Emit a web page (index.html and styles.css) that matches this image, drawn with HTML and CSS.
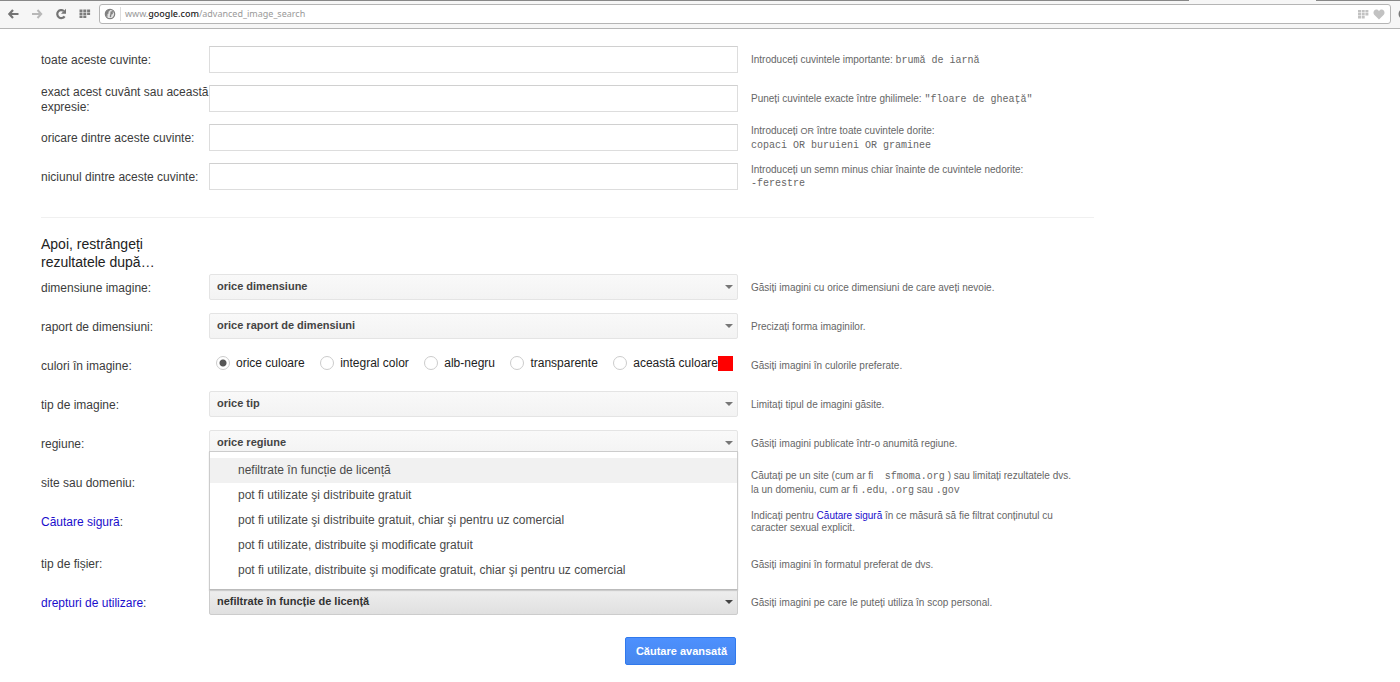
FILE: index.html
```html
<!DOCTYPE html>
<html lang="ro">
<head>
<meta charset="utf-8">
<title>Căutare avansată</title>
<link rel="stylesheet" href="styles.css">
</head>
<body>
<header class="toolbar">
  <div class="tab-strip"><span class="tab-active"></span><span class="tab-rest"></span></div>
  <div class="toolbar-row">
    <nav class="nav">
      <button class="icon-btn" aria-label="Înapoi"><svg width="12" height="10" viewBox="0 0 12 10"><path d="M6 1 2.300 5 6 9M3 5h8.500" fill="none" stroke="#747474" stroke-width="2.200"/></svg></button>
      <button class="icon-btn" aria-label="Înainte"><svg width="12" height="10" viewBox="0 0 12 10"><path d="M6.500 1l3.700 4-3.700 4M9.500 5H1" fill="none" stroke="#b8b8b8" stroke-width="2"/></svg></button>
      <button class="icon-btn" aria-label="Reîncarcă"><svg width="12" height="12" viewBox="0 0 12 12"><path d="M9.600 8.300A4 4 0 1 1 8.800 3" fill="none" stroke="#747474" stroke-width="2.200"/><path d="M11 .8v5H6z" fill="#747474"/></svg></button>
      <button class="icon-btn" aria-label="Acces rapid"><svg width="12" height="10" viewBox="0 0 12 10" fill="#7c7c7c"><path d="M.5.500h3v2.400h-3zM4.300.500h3v2.400h-3zM8.100.500h3v2.400h-3zM.5 3.500h3v2.400h-3zM4.300 3.500h3v2.400h-3zM8.100 3.500h3v2.400h-3zM.5 6.500h3v2.400h-3zM4.300 6.500h3v2.400h-3z"/></svg></button>
    </nav>
    <div class="address">
      <svg class="globe" width="12" height="12" viewBox="0 0 12 12"><circle cx="6" cy="6" r="4.700" fill="#e4e4e4" stroke="#808080" stroke-width="1.200"/><path d="M1.500 4 4 1.500l2 .7-1 1.300-1 .5 1 1-1.500 1L3.500 9 1.500 7zM6.500 3.500 9 3l1 1.500H8.500L9 6 7.500 6.500 7 9.500 5.700 8.500 6.300 6z" fill="#808080"/></svg>
      <span class="url">www.<b>google.com</b>/advanced_image_search</span>
      <svg width="11" height="9" viewBox="0 0 11 9" fill="#c2c2c2"><path d="M0 0h3v2.400H0zM3.700 0h3v2.400h-3zM7.400 0h3v2.400h-3zM0 3h3v2.400H0zM3.700 3h3v2.400h-3zM7.400 3h3v2.400h-3zM0 6h3v2.400H0zM3.700 6h3v2.400h-3z"/></svg>
      <svg class="heart" width="12" height="11" viewBox="0 0 12 11"><path d="M6 10.500 1.200 5.700C-.4 3.700.8.600 3.300.600 4.600.600 5.500 1.300 6 2.300 6.500 1.300 7.400.600 8.700.600c2.500 0 3.700 3.100 2.100 5.100z" fill="#c2c2c2"/></svg>
    </div>
    <svg class="search-edge" width="12" height="12" viewBox="0 0 12 12"><circle cx="6" cy="6" r="4.500" fill="none" stroke="#777" stroke-width="2"/></svg>
  </div>
</header>

<main>
<form class="search-form">
  <section class="words">
    <div class="row">
      <label class="name" for="all">toate aceste cuvinte:</label>
      <input class="box" type="text" id="all">
      <p class="help">Introduceți cuvintele importante: <code>brumă de iarnă</code></p>
    </div>
    <div class="row">
      <label class="name" for="exact">exact acest cuvânt sau această expresie:</label>
      <input class="box" type="text" id="exact">
      <p class="help">Puneți cuvintele exacte între ghilimele: <code>"floare de gheaţă"</code></p>
    </div>
    <div class="row">
      <label class="name" for="any">oricare dintre aceste cuvinte:</label>
      <input class="box" type="text" id="any">
      <p class="help">Introduceți <small>OR</small> între toate cuvintele dorite:<br><code>copaci OR buruieni OR graminee</code></p>
    </div>
    <div class="row">
      <label class="name" for="none">niciunul dintre aceste cuvinte:</label>
      <input class="box" type="text" id="none">
      <p class="help">Introduceți un semn minus chiar înainte de cuvintele nedorite:<br><code>-ferestre</code></p>
    </div>
  </section>

  <section class="filters">
    <h2>Apoi, restrângeți rezultatele după…</h2>
    <div class="row">
      <label class="name" for="size">dimensiune imagine:</label>
      <div class="pick"><select id="size"><option>orice dimensiune</option></select></div>
      <p class="help">Găsiți imagini cu orice dimensiuni de care aveți nevoie.</p>
    </div>
    <div class="row">
      <label class="name" for="ratio">raport de dimensiuni:</label>
      <div class="pick"><select id="ratio"><option>orice raport de dimensiuni</option></select></div>
      <p class="help">Precizați forma imaginilor.</p>
    </div>
    <div class="row">
      <span class="name" id="colors">culori în imagine:</span>
      <div class="radios" role="radiogroup" aria-labelledby="colors">
        <label><input type="radio" name="color" checked>orice culoare</label>
        <label><input type="radio" name="color">integral color</label>
        <label><input type="radio" name="color">alb-negru</label>
        <label><input type="radio" name="color">transparente</label>
        <label><input type="radio" name="color">această culoare<span class="swatch"></span></label>
      </div>
      <p class="help">Găsiți imagini în culorile preferate.</p>
    </div>
    <div class="row">
      <label class="name" for="type">tip de imagine:</label>
      <div class="pick"><select id="type"><option>orice tip</option></select></div>
      <p class="help">Limitați tipul de imagini găsite.</p>
    </div>
    <div class="row">
      <label class="name" for="region">regiune:</label>
      <div class="pick"><select id="region"><option>orice regiune</option></select></div>
      <p class="help">Găsiți imagini publicate într-o anumită regiune.</p>
    </div>
    <div class="row">
      <label class="name" for="site">site sau domeniu:</label>
      <input class="box" type="text" id="site">
      <p class="help">Căutați pe un site (cum ar fi &nbsp;<code> sfmoma.org</code> ) sau limitați rezultatele dvs. la un domeniu, cum ar fi <code>.edu</code>, <code>.org</code> sau <code>.gov</code></p>
    </div>
    <div class="row">
      <span class="name" id="safe"><a href="#">Căutare sigură</a>:</span>
      <div class="pick"><select aria-labelledby="safe"></select></div>
      <p class="help tight">Indicați pentru <a href="#">Căutare sigură</a> în ce măsură să fie filtrat conținutul cu caracter sexual explicit.</p>
    </div>
    <div class="row spaced">
      <label class="name" for="file">tip de fișier:</label>
      <div class="pick"><select id="file"></select></div>
      <p class="help">Găsiți imagini în formatul preferat de dvs.</p>
    </div>
    <div class="row">
      <span class="name" id="rights"><a href="#">drepturi de utilizare</a>:</span>
      <div class="pick open">
        <select aria-labelledby="rights"><option>nefiltrate în funcție de licență</option></select>
        <ul class="menu" role="listbox" aria-labelledby="rights">
          <li role="option" aria-selected="true">nefiltrate în funcție de licență</li>
          <li role="option">pot fi utilizate şi distribuite gratuit</li>
          <li role="option">pot fi utilizate şi distribuite gratuit, chiar şi pentru uz comercial</li>
          <li role="option">pot fi utilizate, distribuite şi modificate gratuit</li>
          <li role="option">pot fi utilizate, distribuite şi modificate gratuit, chiar şi pentru uz comercial</li>
        </ul>
      </div>
      <p class="help">Găsiți imagini pe care le puteți utiliza în scop personal.</p>
    </div>
    <div class="row actions"><button class="submit" type="submit">Căutare avansată</button></div>
  </section>
</form>
</main>
</body>
</html>
```
FILE: styles.css
```css
* { box-sizing: border-box; }

body {
  margin: 0;
  background: #fff;
  color: #3c3c3c;
  font: 12px/15px "Liberation Sans", Arial, sans-serif;
  overflow-x: hidden;
}

a { color: #1a0dcc; text-decoration: none; }

/* Browser toolbar */
.toolbar {
  background: #f6f6f6;
  border-bottom: 1px solid #b5b5b5;
  overflow: hidden;
}
.tab-strip { display: flex; height: 1px; background: #888; }
.tab-active { width: 127px; margin-left: auto; background: #f6f6f6; }
.tab-rest { width: 84px; }
.toolbar-row {
  display: flex;
  align-items: center;
  height: 27px;
  padding-bottom: 1px;
}
.nav { display: flex; gap: 4px; padding: 0 4px 0 3px; }
.icon-btn {
  display: flex;
  align-items: center;
  justify-content: center;
  width: 20px;
  height: 20px;
  padding: 0;
  border: 0;
  background: none;
}
.address {
  flex: 1;
  display: flex;
  align-items: center;
  height: 20px;
  padding: 0 5px 0 4px;
  border: 1px solid #b5b5b5;
  border-radius: 3px;
  background: #fff;
}
.url {
  flex: 1;
  margin-left: 4px;
  padding-left: 4px;
  border-left: 1px solid #ddd;
  color: #999;
  font: 9px/14px "Noto Sans", sans-serif;
}
.url b { color: #222; font-weight: 500; }
.heart { margin-left: 4px; }
.search-edge { margin: 0 -10px 0 7px; flex: none; }

/* Form */
.search-form { padding: 11px 0 16px 41px; }
.row {
  display: grid;
  grid-template-columns: 168px minmax(300px, 529px) minmax(200px, 342px);
  align-items: center;
  min-height: 39px;
}
.name { padding-top: 2px; }
.help {
  margin: 0;
  padding: 0 4px 0 13px;
  color: #666;
  font-size: 10px;
  line-height: 13px;
}
.help.tight { line-height: 12px; }
.help code { font: 10px/12px "Liberation Mono", monospace; }
.help small { font-size: 9px; }

.words { padding-bottom: 21px; }
.filters {
  width: 1053px;
  max-width: 100%;
  border-top: 1px solid #f0f0f0;
  padding-top: 17px;
}
.filters .name { padding-top: 3px; }
.filters .help { padding-top: 2px; }
h2 {
  width: 130px;
  margin: 0 0 -4px;
  color: #222;
  font-size: 14px;
  font-weight: 400;
  line-height: 18px;
}

.box {
  width: 100%;
  height: 27px;
  padding: 0 8px;
  border: 1px solid #ddd;
  border-top-color: #d0d0d0;
  background: #fff;
}

.pick { position: relative; }
.pick::after {
  content: "";
  position: absolute;
  right: 5px;
  top: 11px;
  border: 4px solid transparent;
  border-top-color: #777;
  border-bottom: 0;
}
.pick select {
  display: block;
  width: 100%;
  height: 26px;
  padding: 0 24px 1px 7px;
  appearance: none;
  border: 1px solid #e4e4e4;
  border-radius: 2px;
  background: linear-gradient(#f9f9f9, #f3f3f3);
  color: #444;
  font: bold 11px/15px "Liberation Sans", Arial, sans-serif;
}
.pick.open select {
  border-color: #ccc;
  background: linear-gradient(#eee, #e0e0e0);
  color: #333;
}
.pick.open::after { border-top-color: #444; }

.menu {
  position: absolute;
  z-index: 1;
  left: 0;
  right: 0;
  bottom: 25px;
  margin: 0;
  padding: 6px 0;
  border: 1px solid #ccc;
  border-bottom-color: #bbb;
  background: #fff;
  box-shadow: 0 1px 1px #ccc;
  color: #4a4a4a;
  list-style: none;
}
.menu li { height: 25px; padding: 0 28px; line-height: 25px; }
.menu li[aria-selected="true"] { background: #f1f1f1; }

.radios {
  display: flex;
  justify-content: space-between;
  padding: 0 5px 3px 7px;
  color: #222;
}
.radios label { display: flex; align-items: center; }
.radios input {
  appearance: none;
  width: 14px;
  height: 14px;
  margin: 0 6px 0 0;
  border: 1px solid #ccc;
  border-radius: 50%;
  background: #fff;
}
.radios input:checked { background: radial-gradient(circle, #555 3px, #fff 4px); }
.swatch { width: 15px; height: 15px; background: #f00; }

.spaced { min-height: 46px; }
.spaced + .row { min-height: 31px; }

.actions { padding-top: 20px; }
.submit {
  grid-column: 2;
  justify-self: end;
  height: 28px;
  margin-right: 2px;
  padding: 0 8px 0 10px;
  border: 1px solid #3079ed;
  border-radius: 2px;
  background: linear-gradient(#4d90fe, #4787ed);
  color: #fff;
  font: bold 11px/15px "Liberation Sans", Arial, sans-serif;
}
```
